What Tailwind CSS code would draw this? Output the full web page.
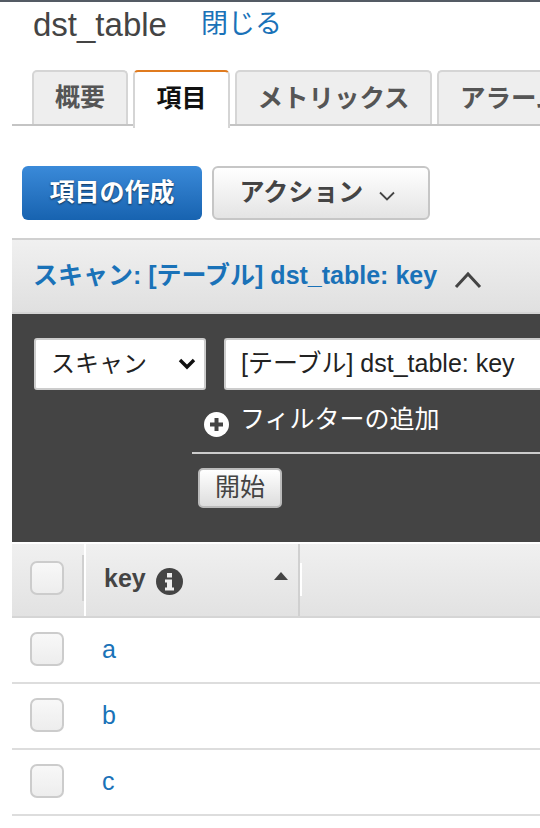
<!DOCTYPE html>
<html lang="ja">
<head>
  <meta charset="UTF-8">
  <title>dst_table</title>
  <script src="https://cdn.jsdelivr.net/npm/@tailwindcss/browser@4"></script>
</head>
<body class="w-[540px] h-[828px] overflow-hidden bg-white font-['Liberation_Sans','Noto_Sans_CJK_JP',sans-serif] text-[#444]">
  <div class="h-[2px] bg-[#545b64]"></div>

  <!-- Title -->
  <div class="h-[44px] pl-[33px] flex items-center">
    <span class="text-[33px] leading-none">dst_table</span>
    <span class="ml-[34px] text-[27px] leading-none text-[#1a72b8]">閉じる</span>
  </div>

  <!-- Tabs -->
  <div class="mt-[24px] ml-[12px] pl-[20px] h-[56px] flex items-start gap-[5px] border-b-2 border-[#c4c4c4]">
    <div class="w-[96px] shrink-0 h-[54px] flex items-center justify-center bg-[#eee] border-2 border-b-0 border-[#d5d5d5] rounded-t-[5px] text-[25px] font-bold text-[#555]">概要</div>
    <div class="relative w-[97px] shrink-0 h-[58px] pb-[3px] flex items-center justify-center bg-white border-2 border-b-0 border-[#d5d5d5] border-t-[#e07b1f] rounded-t-[5px] text-[25px] font-bold text-[#111]">項目</div>
    <div class="w-[197px] shrink-0 h-[54px] flex items-center justify-center bg-[#eee] border-2 border-b-0 border-[#d5d5d5] rounded-t-[5px] text-[25.5px] font-bold text-[#555]">メトリックス</div>
    <div class="w-[103px] shrink-0 h-[54px] flex items-center pl-[21px] bg-[#eee] border-2 border-b-0 border-r-0 border-[#d5d5d5] rounded-tl-[5px] text-[25.5px] font-bold text-[#555] whitespace-nowrap overflow-hidden">アラーム</div>
  </div>

  <!-- Actions -->
  <div class="mt-[40px] ml-[22px] flex gap-[10px]">
    <div class="w-[180px] h-[54px] flex items-center justify-center rounded-[6px] bg-gradient-to-b from-[#3a8ad9] to-[#1763b0] text-white text-[25px] font-bold [text-shadow:0_1px_2px_rgba(0,0,0,0.6)]">項目の作成</div>
    <div class="w-[218px] h-[54px] pr-[6px] flex items-center justify-center gap-[15px] rounded-[6px] border-2 border-[#c6c6c6] bg-gradient-to-b from-white to-[#e4e4e4] text-[25px] font-bold text-[#444]">
      <span>アクション</span>
      <svg class="mt-[6px]" width="18" height="10" viewBox="0 0 18 10" fill="none" stroke="#444" stroke-width="1.8"><path d="M2 1.5 9 8.5 16 1.5"/></svg>
    </div>
  </div>

  <!-- Scan section -->
  <div class="mt-[18px] ml-[12px] border-t-2 border-[#d0d0d0]">
    <div class="h-[74px] pl-[21px] flex items-center bg-gradient-to-b from-[#f0f0f0] to-[#e0e0e0] border-b-2 border-[#d5d5d5]">
      <span class="text-[25px] font-bold text-[#1a72b8] whitespace-nowrap">スキャン: [テーブル] dst_table: key</span>
      <svg class="ml-[17px] mt-[8px]" width="28" height="18" viewBox="0 0 28 18" fill="none" stroke="#444" stroke-width="3"><path d="M2 16 14 3 26 16"/></svg>
    </div>

    <div class="h-[228px] bg-[#444] pt-[24px] pl-[22px] overflow-hidden">
      <div class="flex gap-[18px]">
        <div class="w-[172px] h-[52px] shrink-0 flex items-center justify-between pl-[15px] pr-[8px] bg-white rounded-[3px] border-2 border-[#ccc] text-[24px] text-[#222]">
          <span>スキャン</span>
          <svg width="18" height="12" viewBox="0 0 18 12" fill="none" stroke="#111" stroke-width="3.4"><path d="M2 2 9 9 16 2"/></svg>
        </div>
        <div class="w-[316px] h-[52px] shrink-0 flex items-center pl-[15px] bg-white rounded-l-[3px] border-2 border-r-0 border-[#ccc] text-[25px] text-[#222] whitespace-nowrap">[テーブル] dst_table: key</div>
      </div>

      <div class="ml-[158px]">
        <div class="h-[64px] pl-[12px] flex items-center gap-[11px] border-b-2 border-[#ccc] text-[25px] text-white">
          <svg class="mt-[6px]" width="25" height="25" viewBox="0 0 25 25"><circle cx="12.5" cy="12.5" r="12.5" fill="#fff"/><path d="M12.5 6v13M6 12.5h13" stroke="#444" stroke-width="4"/></svg>
          <span class="-mt-[3px]">フィルターの追加</span>
        </div>
        <div class="mt-[14px] ml-[6px] w-[84px] h-[40px] flex items-center justify-center rounded-[5px] border-2 border-[#bbb] bg-gradient-to-b from-white to-[#ddd] text-[25px] text-[#444]">開始</div>
      </div>
    </div>
  </div>

  <!-- Table -->
  <div class="ml-[12px] mt-[2px]">
    <div class="h-[74px] flex bg-gradient-to-b from-[#f0f0f0] to-[#e2e2e2] border-b-2 border-[#d5d5d5]">
      <div class="w-[74px] border-r-2 border-white flex items-center pl-[18px] pb-[4px]">
        <div class="w-[34px] h-[34px] rounded-[7px] border-2 border-[#ccc] bg-gradient-to-b from-[#f8f8f8] to-[#ededed]"></div>
        <div class="ml-auto w-[2px] h-[46px] bg-[#d0d0d0]"></div>
      </div>
      <div class="w-[214px] border-r-2 border-[#d0d0d0] flex items-center pl-[18px] pb-[2px]">
        <span class="text-[25px] font-bold text-[#444]">key</span>
        <svg class="ml-[10px] mt-[4px]" width="27" height="27" viewBox="0 0 27 27"><circle cx="13.5" cy="13.5" r="13.5" fill="#444"/><rect x="11" y="5" width="5" height="4.5" fill="#eee"/><path d="M9 11.5h7v8h2v3H9v-3h2v-5H9z" fill="#eee"/></svg>
        <svg class="ml-auto mr-[10px] -mt-[6px]" width="14" height="8" viewBox="0 0 14 8"><path d="M7 0 14 8H0z" fill="#444"/></svg>
      </div>
      <div class="w-[2px] h-[33px] mt-[19px] bg-white"></div>
    </div>
    <div class="h-[66px] flex items-center border-b-2 border-[#ddd] pl-[18px]">
      <div class="w-[34px] h-[34px] -mt-[2px] rounded-[7px] border-2 border-[#ccc] bg-gradient-to-b from-[#f8f8f8] to-[#ededed]"></div>
      <span class="ml-[38px] text-[25px] text-[#1a72b8]">a</span>
    </div>
    <div class="h-[66px] flex items-center border-b-2 border-[#ddd] pl-[18px]">
      <div class="w-[34px] h-[34px] -mt-[2px] rounded-[7px] border-2 border-[#ccc] bg-gradient-to-b from-[#f8f8f8] to-[#ededed]"></div>
      <span class="ml-[38px] text-[25px] text-[#1a72b8]">b</span>
    </div>
    <div class="h-[66px] flex items-center border-b-2 border-[#ddd] pl-[18px]">
      <div class="w-[34px] h-[34px] -mt-[2px] rounded-[7px] border-2 border-[#ccc] bg-gradient-to-b from-[#f8f8f8] to-[#ededed]"></div>
      <span class="ml-[38px] text-[25px] text-[#1a72b8]">c</span>
    </div>
  </div>
</body>
</html>
